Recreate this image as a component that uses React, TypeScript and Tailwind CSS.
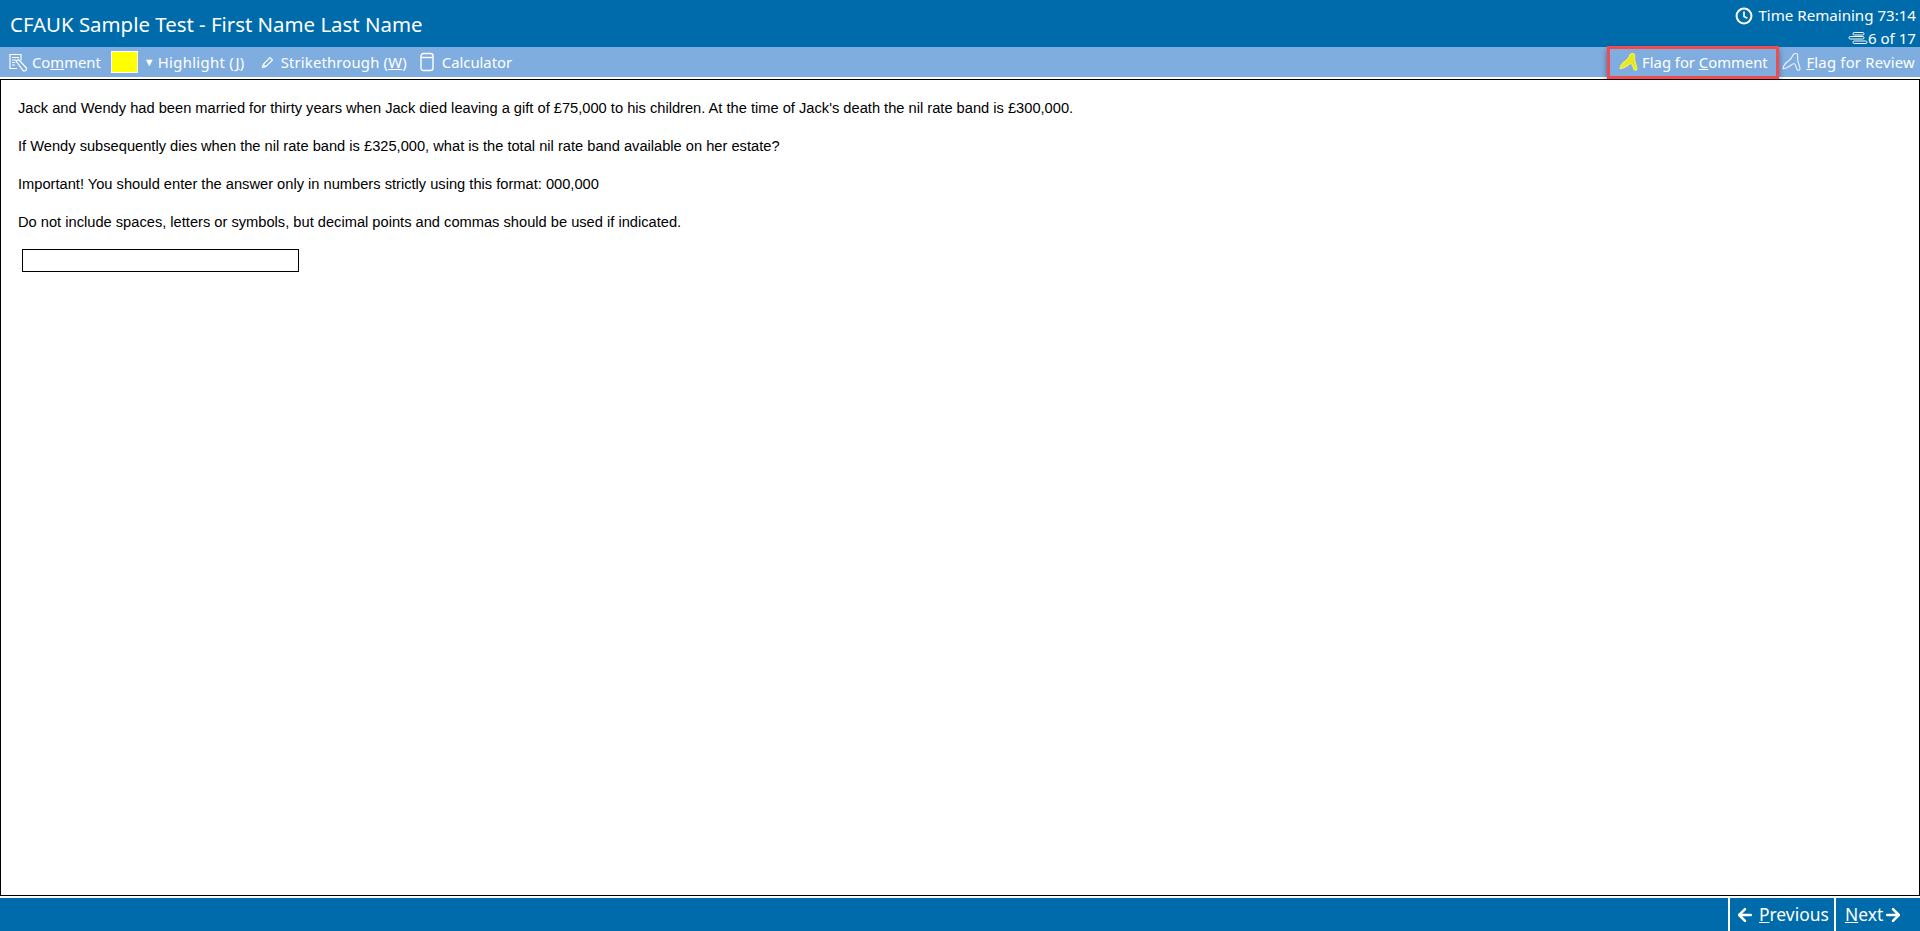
import React from 'react';
import { ArrowLeft, ArrowRight } from 'lucide-react';

const ui = "font-['Noto_Sans',sans-serif]";

const CommentIcon = () => (
  <svg width="20" height="20" viewBox="0 0 20 20" fill="none" stroke="white" strokeWidth="1.2">
    <path d="M9 16.500H2v-14h11v6" />
    <path d="M4 5.500h7M4 8h4M4 10.500h3M4 13h3" />
    <path d="M8 9l2.500-1.500 8 8.500-.5 2.500-2.500.5z" />
  </svg>
);

const PencilIcon = () => (
  <svg width="14" height="14" viewBox="0 0 14 14" fill="none" stroke="white" strokeWidth="1.1">
    <path d="M1.500 12.500l.8-3.200 6.700-6.800 2.500 2.500-6.800 6.700zM2.300 9.300l2.400 2.400" />
  </svg>
);

const CalcIcon = () => (
  <svg width="14" height="20" viewBox="0 0 14 20" fill="none" stroke="white" strokeWidth="1.4">
    <rect x="1" y="1.500" width="12" height="17" rx="2.500" />
    <path d="M1 5.500h12" />
  </svg>
);

const FlagIcon = ({ fill, stroke }: { fill: string; stroke: string }) => (
  <svg width="20" height="20" viewBox="0 0 20 20" fill={fill} stroke={stroke} strokeWidth="1.100">
    <path d="M1 16.500c.5-3 3-6 5.500-7.500 2.500-1.500 3.500-3.500 4.500-6 .6-1.500 3.500-2 4.300-1 .8 1 .2 3.500.4 6 .2 2.500 2.300 6.500 2.300 9 0 1.500-2.500 1.500-3 .5-.8-2-1.500-5.500-2.800-6-2 .5-4 2.500-6 3.500-2 1-4.500 2-5.200 1.500z" />
  </svg>
);

const ClockIcon = () => (
  <svg width="18" height="18" viewBox="0 0 16 16" fill="none" stroke="white" strokeWidth="1.800">
    <circle cx="8" cy="8" r="6.600" />
    <path d="M8 4v4.500l3 1.500" strokeWidth="1.500" />
  </svg>
);

const ListIcon = () => (
  <svg width="20" height="14" viewBox="0 0 20 14" fill="none" stroke="white" strokeWidth="1">
    <rect x="5" y="0.500" width="11" height="2.500" rx="1.200" />
    <rect x="1" y="4.500" width="15" height="2.500" rx="1.200" />
    <rect x="5" y="9" width="14" height="2.500" rx="1.200" />
  </svg>
);

const paragraphs = [
  "Jack and Wendy had been married for thirty years when Jack died leaving a gift of £75,000 to his children. At the time of Jack's death the nil rate band is £300,000.",
  'If Wendy subsequently dies when the nil rate band is £325,000, what is the total nil rate band available on her estate?',
  'Important! You should enter the answer only in numbers strictly using this format: 000,000',
  'Do not include spaces, letters or symbols, but decimal points and commas should be used if indicated.',
];

export default function App() {
  return (
    <div className={`flex h-[931px] w-[1920px] flex-col overflow-hidden bg-white ${ui}`}>
      {/* Header */}
      <div className="flex h-[47px] items-start justify-between bg-[#006bab] text-white">
        <h1 className="ml-[10px] mt-[10px] text-[20.4px] leading-[28px] font-normal">CFAUK Sample Test - First Name Last Name</h1>
        <div className="mr-[4px] mt-[4px] flex flex-col items-end text-[15.1px] leading-[23px]">
          <div className="flex items-center gap-[5px]">
            <ClockIcon />
            <span>Time Remaining 73:14</span>
          </div>
          <div className="flex items-center">
            <ListIcon />
            <span>6 of 17</span>
          </div>
        </div>
      </div>

      {/* Toolbar */}
      <div className="flex h-[30px] items-center justify-between bg-[#80ade0] text-[14.8px] text-white">
        <div className="flex items-center">
          <span className="ml-[8px] flex items-center gap-[4px]">
            <CommentIcon />
            <span>Co<u>m</u>ment</span>
          </span>
          <span className="ml-[10px] h-[22px] w-[27px] border border-white bg-[#ffff00]" />
          <span className="ml-[6px] text-[11px]">▼</span>
          <span className="ml-[3px] tracking-[0.35px]">Highlight (<u>J</u>)</span>
          <span className="ml-[16px] flex items-center gap-[6px]">
            <PencilIcon />
            <span className="tracking-[0.2px]">Strikethrough (<u>W</u>)</span>
          </span>
          <span className="ml-[13px] flex items-center gap-[8px]">
            <CalcIcon />
            <span>Calculator</span>
          </span>
        </div>
        <div className="flex items-center">
          <span className="flex h-[33px] w-[172px] items-center justify-center gap-[3px] border-[3px] border-[#f04c50] shadow-[0_3px_6px_rgba(0,0,0,0.4)]">
            <FlagIcon fill="#e8e81c" stroke="#f0f060" />
            <span>Flag for <u>C</u>omment</span>
          </span>
          <span className="ml-[3px] mr-[5px] flex items-center gap-[4px]">
            <FlagIcon fill="none" stroke="#eef4fb" />
            <span className="tracking-[0.24px]"><u>F</u>lag for Review</span>
          </span>
        </div>
      </div>

      {/* Question */}
      <main className="mt-[2px] flex-1 border-[1px] border-black bg-white pl-[17px] pt-[20px] font-['Liberation_Sans',sans-serif] text-[14.67px] leading-[17px] text-black">
        <div className="flex flex-col gap-[21px]">
          {paragraphs.map((p) => (
            <p key={p}>{p}</p>
          ))}
        </div>
        <div className="ml-[4px] mt-[18px] h-[23px] w-[277px] border border-black" />
      </main>

      {/* Footer */}
      <div className="mt-[2px] flex h-[33px] justify-end bg-[#006bab] text-[17.4px] text-white">
        <button className="flex w-[106px] items-center gap-[4px] border-l-[2px] border-white pl-[5px]">
          <ArrowLeft size={20} strokeWidth={3} />
          <span><u>P</u>revious</span>
        </button>
        <button className="flex w-[86px] items-center border-l-[2px] border-white pl-[9px]">
          <span><u>N</u>ext</span>
          <ArrowRight size={20} strokeWidth={3} />
        </button>
      </div>
    </div>
  );
}
